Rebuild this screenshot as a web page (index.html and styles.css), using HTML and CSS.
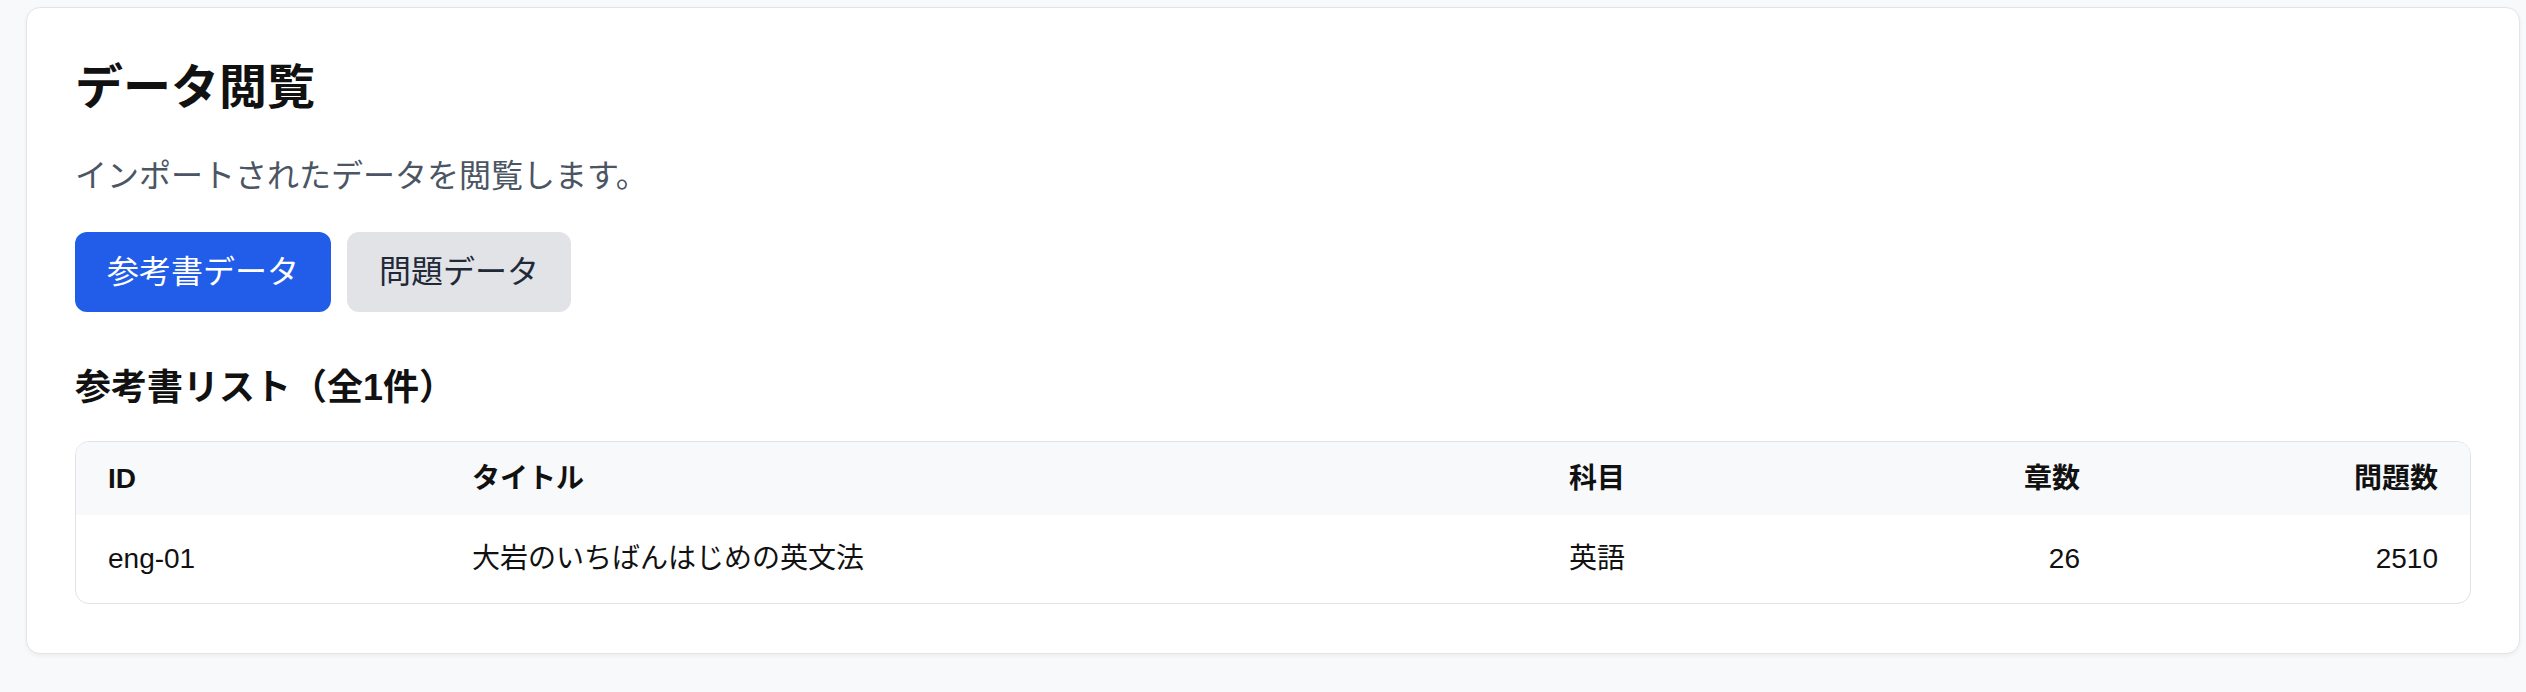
FILE: index.html
```html
<!DOCTYPE html>
<html lang="ja">
<head>
<meta charset="utf-8">
<title>データ閲覧</title>
<link rel="stylesheet" href="styles.css">
</head>
<body>
<div class="page">
  <section class="card">
    <h1 class="title">データ閲覧</h1>
    <p class="desc">インポートされたデータを閲覧します。</p>
    <div class="tabs">
      <button class="tab tab-active">参考書データ</button>
      <button class="tab">問題データ</button>
    </div>
    <h2 class="section-title">参考書リスト（全1件）</h2>
    <div class="table-wrap">
      <table class="data-table">
        <colgroup>
          <col class="c-id">
          <col class="c-title">
          <col class="c-subject">
          <col class="c-chapters">
          <col class="c-questions">
        </colgroup>
        <thead>
          <tr>
            <th>ID</th>
            <th>タイトル</th>
            <th>科目</th>
            <th class="num">章数</th>
            <th class="num">問題数</th>
          </tr>
        </thead>
        <tbody>
          <tr>
            <td>eng-01</td>
            <td>大岩のいちばんはじめの英文法</td>
            <td>英語</td>
            <td class="num">26</td>
            <td class="num">2510</td>
          </tr>
        </tbody>
      </table>
    </div>
  </section>
</div>
</body>
</html>
```

FILE: styles.css
```css
* {
  box-sizing: border-box;
}

html, body {
  margin: 0;
  padding: 0;
  background: #f8f9fa;
}

body {
  font-family: "Liberation Sans", "Noto Sans CJK JP", sans-serif;
  color: #111827;
}

.page {
  padding: 7px 6px 40px 26px;
}

.card {
  background: #ffffff;
  border: 1px solid #e3e4e6;
  border-radius: 14px;
  box-shadow: 0 2px 4px rgba(0, 0, 0, 0.05);
  padding: 48px 48px 49px 48px;
}

.title {
  margin: 0 0 32px 0;
  font-size: 48px;
  line-height: 64px;
  font-weight: 700;
  color: #111111;
}

.desc {
  margin: 0 0 32px 0;
  font-size: 32px;
  line-height: 48px;
  color: #4b5563;
}

.tabs {
  display: flex;
  gap: 16px;
  margin-bottom: 48px;
}

.tab {
  font-family: inherit;
  font-size: 32px;
  line-height: 48px;
  padding: 16px 32px;
  border: none;
  border-radius: 12px;
  background: #e2e3e7;
  color: #1f2937;
  cursor: pointer;
}

.tab-active {
  background: #215de9;
  color: #ffffff;
}

.section-title {
  margin: 0 0 25px 0;
  font-size: 36px;
  line-height: 56px;
  font-weight: 700;
  color: #111111;
}

.table-wrap {
  border: 1px solid #e2e3e5;
  border-radius: 14px;
  overflow: hidden;
}

.data-table {
  width: 100%;
  border-collapse: collapse;
  table-layout: fixed;
  font-size: 28px;
  line-height: 40px;
}

.c-id { width: 364px; }
.c-title { width: 1097px; }
.c-subject { width: 300px; }
.c-chapters { width: 275px; }
.c-questions { width: 358px; }

.data-table thead tr {
  background: #f8f9fa;
}

.data-table th {
  text-align: left;
  font-weight: 700;
  color: #111111;
  padding: 16px 32px 16px 32px;
  height: 73px;
}

.data-table td {
  padding: 24px 32px;
  color: #111111;
  font-weight: 400;
}

.data-table .num {
  text-align: right;
}
```
